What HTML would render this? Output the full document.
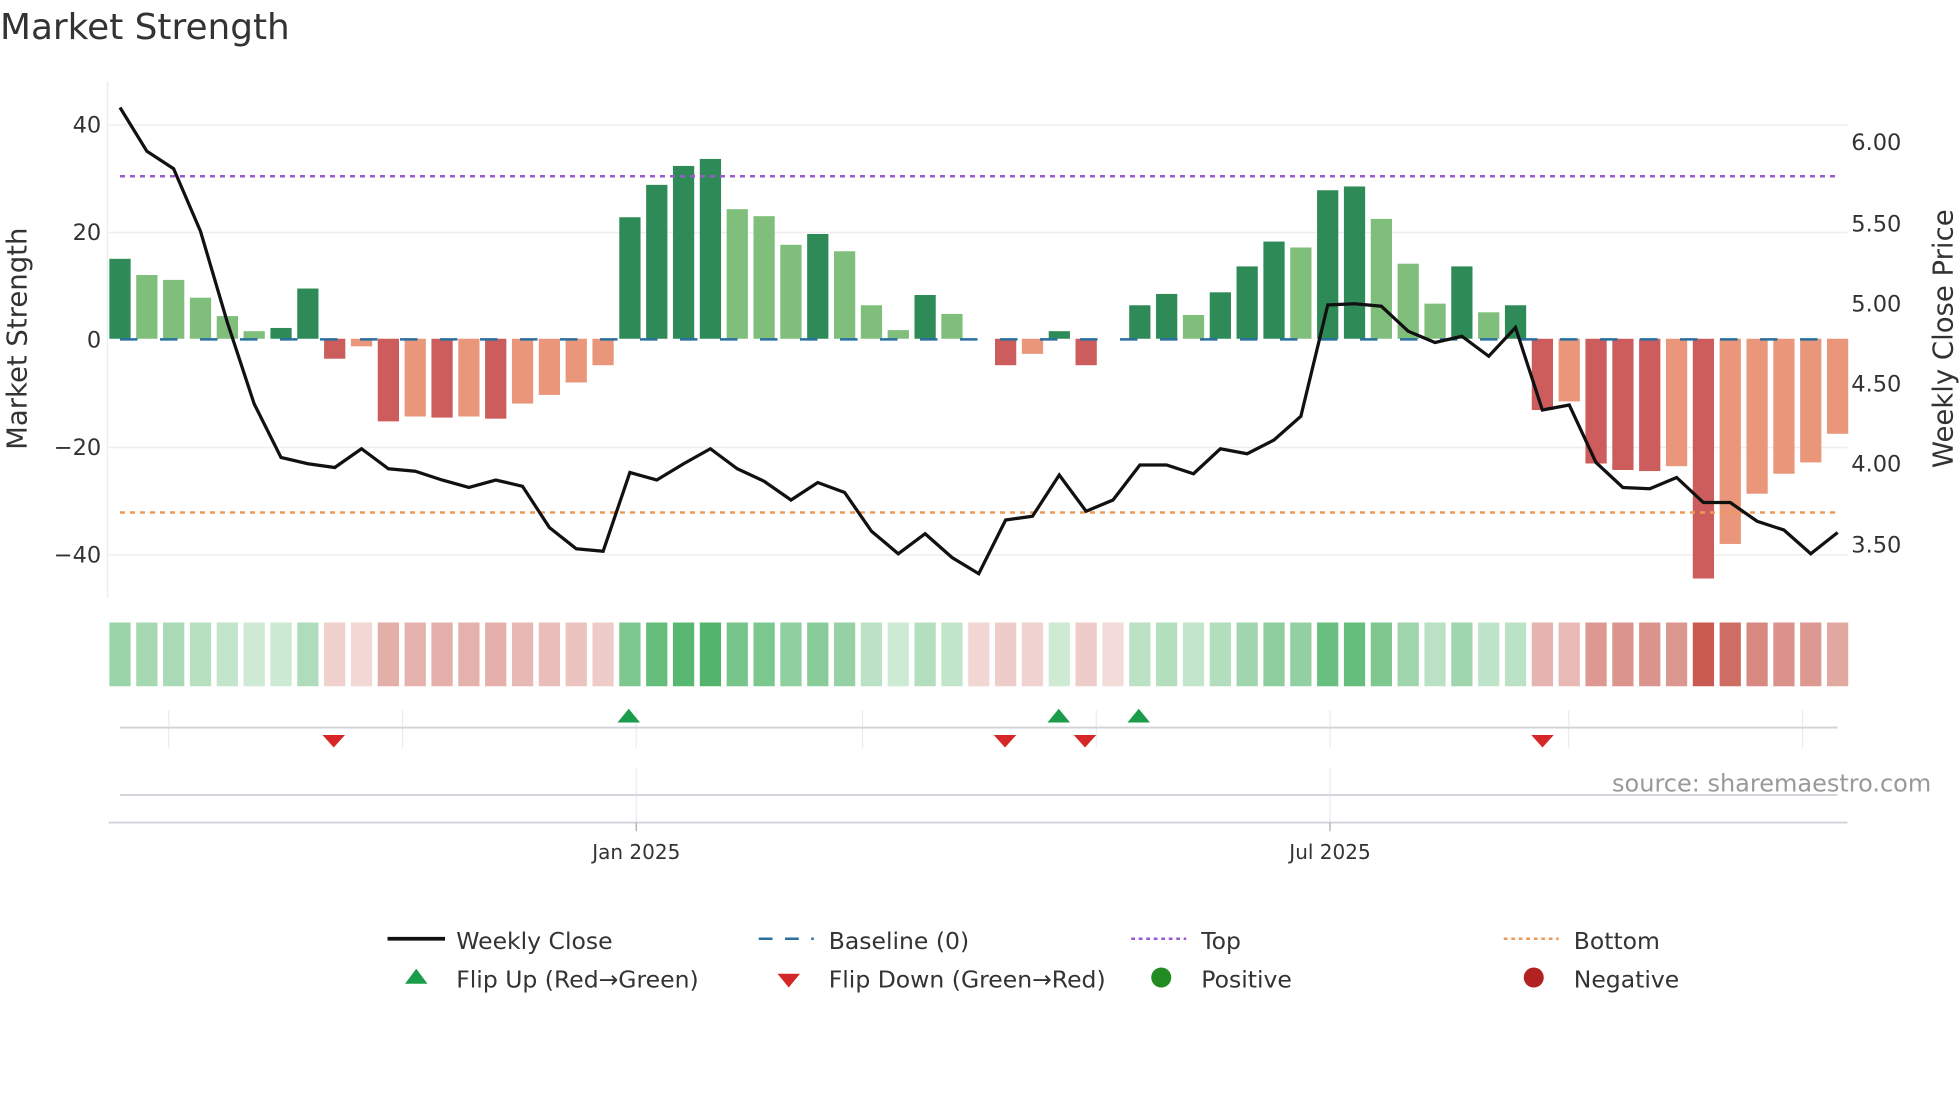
<!DOCTYPE html>
<html><head><meta charset="utf-8"><style>
html,body{margin:0;padding:0;background:#fff;width:1960px;height:1102px;overflow:hidden}
svg{display:block}
text{font-family:"DejaVu Sans","Liberation Sans",sans-serif;fill:#333}
</style></head><body>
<svg id="s" width="1960" height="1102" viewBox="0 0 1568 881.6" xmlns="http://www.w3.org/2000/svg">
<text x="0" y="31" font-size="28.7" fill="#333">Market Strength</text>
<g stroke="#eeeeee" stroke-width="1.2">
<line x1="87" y1="100" x2="1478" y2="100"/><line x1="87" y1="186" x2="1478" y2="186"/>
<line x1="87" y1="358" x2="1478" y2="358"/><line x1="87" y1="444" x2="1478" y2="444"/>
</g>
<line x1="86" y1="65" x2="86" y2="478" stroke="#eee" stroke-width="1.2"/>
<g id="bars"></g>
<line x1="96" y1="271.5" x2="1470" y2="271.5" stroke="#2a6f9e" stroke-width="2" stroke-dasharray="14,18"/>
<line x1="96" y1="141" x2="1470" y2="141" stroke="#9b59d0" stroke-width="2" stroke-dasharray="4,4"/>
<line x1="96" y1="410" x2="1470" y2="410" stroke="#ee9a55" stroke-width="2" stroke-dasharray="4,4"/>
<polyline id="pl" fill="none" stroke="#111" stroke-width="2.6" stroke-linejoin="miter"/>
<g font-size="18" text-anchor="end">
<text x="81" y="106">40</text><text x="81" y="192">20</text><text x="81" y="278">0</text>
<text x="81" y="364">−20</text><text x="81" y="450">−40</text>
</g>
<g font-size="18">
<text x="1481" y="120">6.00</text><text x="1481" y="185">5.50</text><text x="1481" y="249">5.00</text>
<text x="1481" y="313">4.50</text><text x="1481" y="377">4.00</text><text x="1481" y="442">3.50</text>
</g>
<text transform="translate(21,271) rotate(-90)" font-size="22" text-anchor="middle">Market Strength</text>
<text transform="translate(1562,271) rotate(-90)" font-size="22" text-anchor="middle">Weekly Close Price</text>
<g id="strip"></g>
<g stroke="#e8ecf0" stroke-width="1">
<line x1="135" y1="568" x2="135" y2="598"/><line x1="322" y1="568" x2="322" y2="598"/>
<line x1="509" y1="568" x2="509" y2="598"/><line x1="690" y1="568" x2="690" y2="598"/>
<line x1="877" y1="568" x2="877" y2="598"/><line x1="1064" y1="568" x2="1064" y2="598"/>
<line x1="1255" y1="568" x2="1255" y2="598"/><line x1="1442" y1="568" x2="1442" y2="598"/>
<line x1="509" y1="615" x2="509" y2="658"/><line x1="1064" y1="615" x2="1064" y2="658"/>
</g>
<line x1="96" y1="582" x2="1470" y2="582" stroke="#d0d3d8" stroke-width="1.5"/>
<line x1="96" y1="636" x2="1470" y2="636" stroke="#d0d3d8" stroke-width="1.5"/>
<line x1="87" y1="658" x2="1478" y2="658" stroke="#d0d3d8" stroke-width="1.5"/>
<line x1="509" y1="658" x2="509" y2="665" stroke="#aaa"/><line x1="1064" y1="658" x2="1064" y2="665" stroke="#aaa"/>
<g fill="#1a9c4a">
<polygon points="494,578 512,578 503,567"/><polygon points="838,578 856,578 847,567"/><polygon points="902,578 920,578 911,567"/>
</g>
<g fill="#d62728">
<polygon points="258,588 276,588 267,598"/><polygon points="795,588 813,588 804,598"/>
<polygon points="859,588 877,588 868,598"/><polygon points="1225,588 1243,588 1234,598"/>
</g>
<text x="1545" y="633" font-size="19.2" text-anchor="end" style="fill:#999">source: sharemaestro.com</text>
<text x="509" y="687" font-size="16" text-anchor="middle">Jan 2025</text>
<text x="1064" y="687" font-size="16" text-anchor="middle">Jul 2025</text>
<g font-size="18.8">
<line x1="310" y1="751" x2="356" y2="751" stroke="#111" stroke-width="3"/>
<text x="365" y="759">Weekly Close</text>
<line x1="607" y1="751" x2="651" y2="751" stroke="#2a6f9e" stroke-width="2" stroke-dasharray="11,10"/>
<text x="663" y="759">Baseline (0)</text>
<line x1="905" y1="751" x2="949" y2="751" stroke="#9b59d0" stroke-width="2" stroke-dasharray="3,3"/>
<text x="961" y="759">Top</text>
<line x1="1203" y1="751" x2="1247" y2="751" stroke="#ee9a55" stroke-width="2" stroke-dasharray="3,3"/>
<text x="1259" y="759">Bottom</text>
<polygon points="324,787 342,787 333,775" fill="#1a9c4a"/>
<text x="365" y="790">Flip Up (Red→Green)</text>
<polygon points="622,779 640,779 631,790" fill="#d62728"/>
<text x="663" y="790">Flip Down (Green→Red)</text>
<circle cx="929" cy="782" r="8" fill="#228b22"/>
<text x="961" y="790">Positive</text>
<circle cx="1227" cy="782" r="8" fill="#b22222"/>
<text x="1259" y="790">Negative</text>
</g>
</svg>
<script>
var v=[14.8,11.8,10.9,7.6,4.2,1.4,2,9.3,-3.7,-1.4,-15.3,-14.4,-14.6,-14.4,-14.8,-12,-10.4,-8.1,-4.9,22.5,28.5,32,33.3,24,22.7,17.4,19.4,16.2,6.2,1.6,8.1,4.6,0,-4.9,-2.8,1.4,-4.9,0,6.2,8.3,4.4,8.6,13.4,18,16.9,27.5,28.2,22.2,13.9,6.5,13.4,4.9,6.2,-13.2,-11.6,-23.1,-24.3,-24.5,-23.6,-44.4,-38,-28.7,-25,-22.9,-17.6];
var dark={0:1,6:1,7:1,8:1,10:1,12:1,14:1,19:1,20:1,21:1,22:1,26:1,30:1,33:1,35:1,36:1,38:1,39:1,41:1,42:1,43:1,45:1,46:1,50:1,52:1,53:1,55:1,56:1,57:1,59:1};
var py=[86,121,135,185,258,323,366,371,374,359,375,377,384,390,384,389,422,439,441,378,384,371,359,375,385,400,386,394,425,443,427,446,459,416,413,380,409,400,372,372,379,359,363,352,333,244,243,245,265,274,269,285,262,328,324,370,390,391,382,402,402,417,424,443,426];
var ns="http://www.w3.org/2000/svg",B=document.getElementById('bars'),S=document.getElementById('strip'),pts=[];
function mix(c,t){return 'rgb('+c.map(function(x){return Math.round(255+(x-255)*t)}).join(',')+')'}
for(var i=0;i<65;i++){
 var cx=96+i*21.47,val=v[i],r;
 if(val!==0){r=document.createElementNS(ns,'rect');
  var y0=271,y1=271-val*4.32;
  r.setAttribute('x',cx-8.5);r.setAttribute('width',17);
  r.setAttribute('y',Math.min(y0,y1));r.setAttribute('height',Math.abs(y1-y0));
  r.setAttribute('fill',val>0?(dark[i]?'#2e8b57':'#7fbf7b'):(dark[i]?'#cd5c5c':'#e9967a'));B.appendChild(r);}
 r=document.createElementNS(ns,'rect');
 r.setAttribute('x',cx-8.5);r.setAttribute('width',17);r.setAttribute('y',498);r.setAttribute('height',51);
 var a=Math.abs(val),col;
 if(val>0)col=mix([80,180,105],0.25+0.75*Math.min(a,34)/34);
 else col=mix([200,90,80],0.22+0.78*Math.min(a,44.4)/44.4);
 if(val===0)col=i==32?mix([200,90,80],0.25):mix([200,90,80],0.22);
 r.setAttribute('fill',col);S.appendChild(r);
 pts.push(cx.toFixed(1)+','+py[i]);
}
document.getElementById('pl').setAttribute('points',pts.join(' '));
</script>
</body></html>
